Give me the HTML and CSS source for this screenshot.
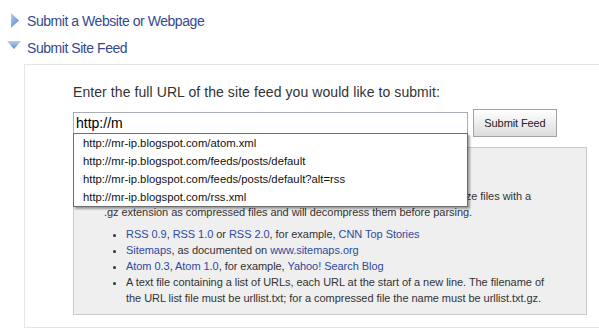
FILE: index.html
```html
<!DOCTYPE html>
<html lang="en">
<head>
  <meta charset="UTF-8" />
  <title>Submit Site Feed</title>
  <link rel="stylesheet" href="styles.css">
</head>
<body>

  <div class="section-toggle">
    <svg class="arrow" width="20" height="27" viewBox="0 0 20 27">
      <defs>
        <linearGradient id="arrowRight" x1="0" y1="0" x2="1" y2="1">
          <stop offset="0" stop-color="#b9d0ee" />
          <stop offset="1" stop-color="#4f82c9" />
        </linearGradient>
      </defs>
      <polygon points="7,6 15,13.5 7,21" fill="url(#arrowRight)" />
    </svg>
    <a href="#">Submit a Website or Webpage</a>
  </div>

  <div class="section-toggle">
    <svg class="arrow" width="20" height="27" viewBox="0 0 20 27">
      <defs>
        <linearGradient id="arrowDown" x1="0" y1="0" x2="0" y2="1">
          <stop offset="0" stop-color="#b9d0ee" />
          <stop offset="1" stop-color="#5a8bce" />
        </linearGradient>
      </defs>
      <polygon points="3,7 17,7 10,15" fill="url(#arrowDown)" />
    </svg>
    <a href="#">Submit Site Feed</a>
  </div>

  <div class="panel">
    <p class="prompt">Enter the full URL of the site feed you would like to submit:</p>

    <form class="feed-form" onsubmit="return false;">
      <div class="url-field">
        <input type="text" id="feed-url" value="http://m" />
        <ul class="suggestions">
          <li>http://mr-ip.blogspot.com/atom.xml</li>
          <li>http://mr-ip.blogspot.com/feeds/posts/default</li>
          <li>http://mr-ip.blogspot.com/feeds/posts/default?alt=rss</li>
          <li>http://mr-ip.blogspot.com/rss.xml</li>
        </ul>
      </div>
      <button type="submit" class="submit-button">Submit Feed</button>
    </form>

    <div class="info-box">
      <p>
        If your feed file is large you can compress it using gzip. Google can recognize files with a<br>
        .gz extension as compressed files and will decompress them before parsing.
      </p>
      <ul class="formats">
        <li><a href="#">RSS 0.9</a>, <a href="#">RSS 1.0</a> or <a href="#">RSS 2.0</a>, for example, <a href="#">CNN Top Stories</a></li>
        <li><a href="#">Sitemaps</a>, as documented on <a href="#">www.sitemaps.org</a></li>
        <li><a href="#">Atom 0.3</a>, <a href="#">Atom 1.0</a>, for example, <a href="#">Yahoo! Search Blog</a></li>
        <li>A text file containing a list of URLs, each URL at the start of a new line. The filename of<br>the URL list file must be urllist.txt; for a compressed file the name must be urllist.txt.gz.</li>
      </ul>
    </div>
  </div>

</body>
</html>
```

FILE: styles.css
```css
body {
  font-family: "Liberation Sans", Arial, sans-serif;
  background: #fff;
  color: #333;
  margin: 0;
  padding-top: 7px;
  overflow: hidden;
}

a {
  color: #2e4a9e;
  text-decoration: none;
}

.section-toggle {
  display: flex;
  align-items: center;
  height: 27px;
  padding-left: 4px;
  gap: 3px;
}

.section-toggle a {
  color: #34498f;
  font-size: 14px;
  letter-spacing: -0.45px;
}

.arrow {
  display: block;
}

/* expanded section */
.panel {
  margin: 3px -20px 0 24px;
  border: 1px solid #e6e6e6;
  padding: 19px 0 12px 48px;
}

.prompt {
  margin: 0 0 9px;
  font-size: 14px;
  letter-spacing: 0.08px;
  line-height: 16px;
  color: #333;
}

.feed-form {
  display: flex;
  align-items: center;
  gap: 5px;
  height: 28px;
}

.url-field {
  position: relative;
}

.url-field input {
  display: block;
  box-sizing: border-box;
  width: 395px;
  height: 22px;
  margin: 0;
  padding: 0 2px;
  border: 1px solid #a6adb5;
  font-family: "Liberation Sans", Arial, sans-serif;
  font-size: 14px;
  color: #000;
  outline: none;
}

.suggestions {
  position: absolute;
  top: 21px;
  left: 0;
  z-index: 10;
  box-sizing: border-box;
  width: 395px;
  margin: 0;
  padding: 0;
  list-style: none;
  background: #fff;
  border: 1px solid #6d6d6d;
  box-shadow: 2px 2px 2px rgba(0, 0, 0, 0.35);
}

.suggestions li {
  height: 18px;
  line-height: 18px;
  padding-left: 9px;
  font-size: 11.3px;
  color: #111;
}

.submit-button {
  box-sizing: border-box;
  width: 84px;
  height: 28px;
  margin: 0;
  padding: 0;
  background: linear-gradient(to bottom, #ffffff, #dcdcdc);
  border: 1px solid #a3a3a3;
  font-family: "Liberation Sans", Arial, sans-serif;
  font-size: 11px;
  letter-spacing: -0.1px;
  color: #222;
}

.info-box {
  box-sizing: border-box;
  width: 514px;
  margin-top: 10px;
  padding: 40px 0 8px 30px;
  background: #efefef;
  border: 1px solid #cacaca;
  font-size: 11px;
  letter-spacing: -0.05px;
  line-height: 16px;
  color: #333;
}

.info-box p {
  margin: 0;
}

.formats {
  margin: 6px 0 0;
  padding-left: 22px;
}
```
